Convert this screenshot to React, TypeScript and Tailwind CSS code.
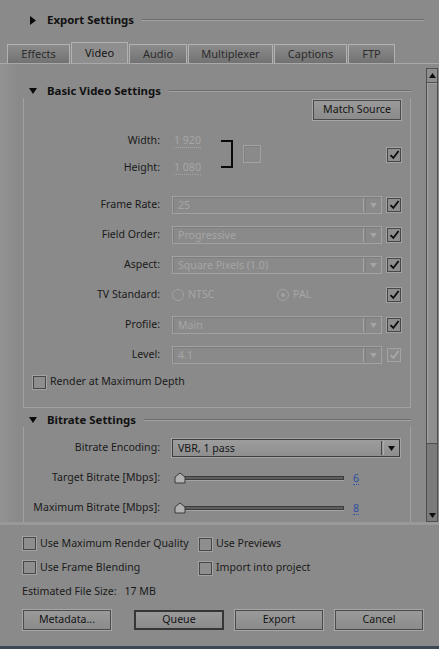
import clsx from "clsx";

const font = "font-['Noto_Sans',sans-serif]";
const dim = "text-[#a6a6a6]";

function DownTri({ className }: { className?: string }) {
  return (
    <svg width="8" height="6" viewBox="0 0 8 6" className={className}>
      <path d="M0 0H8L4 6Z" fill="currentColor" />
    </svg>
  );
}

function Check({ checked, disabled, size = 14 }: { checked?: boolean; disabled?: boolean; size?: number }) {
  return (
    <span
      className={clsx(
        "flex shrink-0 items-center justify-center border",
        size === 14 ? "h-[14px] w-[14px]" : "h-[13px] w-[13px]",
        disabled
          ? "border-[#a3a3a3] bg-[#8b8b8b]"
          : "border-[#474747] bg-[#8e8e8e] shadow-[0_0_0_1px_#a2a2a2]"
      )}
    >
      {checked && (
        <svg width="11" height="10" viewBox="0 0 11 10">
          <path
            d="M1.5 5.2L4.3 8L9.6 1"
            stroke={disabled ? "#a9a9a9" : "#0c0c0c"}
            strokeWidth="1.8"
            fill="none"
          />
        </svg>
      )}
    </span>
  );
}

function Select({ value, enabled, width }: { value: string; enabled?: boolean; width: string }) {
  return (
    <div
      className={clsx(
        "flex h-[18px] items-center border",
        width,
        enabled
          ? "border-[#3e3e3e] bg-gradient-to-b from-[#9d9d9d] to-[#8e8e8e] shadow-[0_0_0_1px_#a3a3a3]"
          : "border-[#a2a2a2] shadow-[inset_1px_1px_0_#7d7d7d]"
      )}
    >
      <span className={clsx("flex-1 pl-[5px] leading-none", enabled ? "text-[#161616]" : dim)}>{value}</span>
      <span
        className={clsx(
          "h-[14px] w-[3px] border-l border-r",
          enabled ? "border-l-[#444] border-r-[#a9a9a9]" : "border-l-[#a6a6a6] border-r-[#7f7f7f]"
        )}
      />
      <span className="flex w-[15px] justify-center">
        <svg width="7" height="5" viewBox="0 0 7 5">
          <path d="M0 0H7L3.5 5Z" fill={enabled ? "#0d0d0d" : "#a4a4a4"} />
        </svg>
      </span>
    </div>
  );
}

function Row({ label, children }: { label: string; children: React.ReactNode }) {
  return (
    <div className="flex h-[30px] items-center">
      <span className="w-[136px] text-right text-[#1a1a1a]">{label}</span>
      <div className="ml-[12px] flex items-center">{children}</div>
    </div>
  );
}

function GroupHeader({ title }: { title: string }) {
  return (
    <div className="relative -mx-px flex h-[14px] items-center bg-[#8a8a8a]">
      <DownTri className="ml-[6px] text-[#0a0a0a]" />
      <span className="ml-[10px] text-[11.4px] font-bold text-[#111]">{title}</span>
      <span className="ml-[8px] h-[2px] flex-1 border-t border-b border-t-[#6c6c6c] border-b-[#a3a3a3]" />
    </div>
  );
}

function Radio({ on, label }: { on?: boolean; label: string }) {
  return (
    <span className="flex items-center">
      <span className="flex h-[12px] w-[12px] items-center justify-center rounded-full border border-[#a3a3a3]">
        {on && <span className="h-[4px] w-[4px] rounded-full bg-[#a0a0a0]" />}
      </span>
      <span className={clsx("ml-[4px]", dim)}>{label}</span>
    </span>
  );
}

function Slider({ value }: { value: string }) {
  return (
    <div className="flex items-center">
      <div className="relative flex h-[14px] w-[172px] items-center">
        <span className="ml-[8px] h-[4px] w-[164px] border border-[#3c3c3c] bg-[#5e5e5e] shadow-[0_1px_0_#a4a4a4]" />
        <svg width="12" height="12" viewBox="0 0 12 12" className="absolute left-[2px] top-[1px]">
          <path d="M1 11V5L6 1L11 5V11Z" fill="#b2b2b2" stroke="#3a3a3a" strokeWidth="1" />
        </svg>
      </div>
      <span className="ml-[9px] border-b border-dotted border-[#2f55a8] leading-[12px] text-[#2d4f9e]">{value}</span>
    </div>
  );
}

function Btn({ label, primary }: { label: string; primary?: boolean }) {
  return (
    <button
      className={clsx(
        "flex h-[20px] items-center justify-center bg-gradient-to-b from-[#9a9a9a] to-[#8b8b8b] text-[#141414]",
        primary
          ? "w-[90px] border-2 border-[#363636]"
          : "w-[88px] border border-[#4a4a4a] shadow-[0_0_0_1px_#a6a6a6]"
      )}
    >
      {label}
    </button>
  );
}

const tabs = [
  { name: "Effects", w: "w-[63px]" },
  { name: "Video", w: "w-[57px]", active: true },
  { name: "Audio", w: "w-[58px]" },
  { name: "Multiplexer", w: "w-[85px]" },
  { name: "Captions", w: "w-[73px]" },
  { name: "FTP", w: "w-[47px]" },
];

export default function App() {
  return (
    <div className={clsx("flex h-[649px] w-[439px] flex-col overflow-hidden bg-[#8a8a8a] text-[10.6px]", font)}>
      {/* export settings header */}
      <div className="flex h-[40px] shrink-0 items-center pl-[30px] pr-[15px]">
        <svg width="6" height="9" viewBox="0 0 6 9">
          <path d="M0 0L6 4.5L0 9Z" fill="#0a0a0a" />
        </svg>
        <span className="ml-[11px] text-[11.4px] font-bold text-[#111]">Export Settings</span>
        <span className="ml-[8px] h-[2px] flex-1 border-t border-b border-t-[#6c6c6c] border-b-[#a3a3a3]" />
      </div>

      {/* tabs */}
      <div className="flex h-[24px] shrink-0 items-end gap-[1px] border-b border-[#a9a9a9] pl-[7px]">
        {tabs.map((t) => (
          <div
            key={t.name}
            className={clsx(
              "flex items-center justify-center border-l border-r border-t border-[#b2b2b2] text-[11px]",
              t.w,
              t.active
                ? "h-[21px] bg-[#8e8e8e] text-[#151515]"
                : "h-[19px] bg-gradient-to-b from-[#8c8c8c] to-[#727272] text-[#2c2c2c]"
            )}
          >
            {t.name}
          </div>
        ))}
      </div>

      {/* scroll area */}
      <div className="flex h-[458px] shrink-0">
        <div className="flex-1 overflow-hidden bg-[linear-gradient(to_right,#939393,#8a8a8a_18px)]">
          {/* Basic video settings */}
          <div className="ml-[23px] mt-[20px] w-[388px] border-b border-l border-r border-[#a1a1a1] pb-[15px]">
            <GroupHeader title="Basic Video Settings" />
            <div className="mt-[2px] flex justify-end pr-[9px]">
              <Btn label="Match Source" />
            </div>

            <div className="mt-[7px] flex h-[54px] items-center">
              <div className="flex w-[136px] flex-col items-end text-[#1a1a1a]">
                <span className="flex h-[27px] items-center">Width:</span>
                <span className="flex h-[27px] items-center">Height:</span>
              </div>
              <div className="ml-[14px] flex w-[47px] flex-col">
                <span className="flex h-[27px] items-center">
                  <span className={clsx("border-b border-dotted border-[#a6a6a6] leading-[13px]", dim)}>1 920</span>
                </span>
                <span className="flex h-[27px] items-center">
                  <span className={clsx("border-b border-dotted border-[#a6a6a6] leading-[13px]", dim)}>1 080</span>
                </span>
              </div>
              <span className="h-[28px] w-[12px] border-b-2 border-r-2 border-t-2 border-[#0a0a0a]" />
              <span className="ml-[10px] h-[18px] w-[18px] border border-[#a2a2a2] shadow-[inset_1px_1px_0_#7f7f7f]" />
              <span className="flex-1" />
              <span className="mr-[9px] mt-[2px]">
                <Check checked />
              </span>
            </div>

            <div className="mt-[9px]">
              <Row label="Frame Rate:">
                <Select value="25" width="w-[210px]" />
                <span className="ml-[5px]"><Check checked /></span>
              </Row>
              <Row label="Field Order:">
                <Select value="Progressive" width="w-[210px]" />
                <span className="ml-[5px]"><Check checked /></span>
              </Row>
              <Row label="Aspect:">
                <Select value="Square Pixels (1.0)" width="w-[210px]" />
                <span className="ml-[5px]"><Check checked /></span>
              </Row>
              <Row label="TV Standard:">
                <div className="flex w-[210px] items-center">
                  <span className="w-[105px]"><Radio label="NTSC" /></span>
                  <Radio on label="PAL" />
                </div>
                <span className="ml-[5px]"><Check checked /></span>
              </Row>
              <Row label="Profile:">
                <Select value="Main" width="w-[210px]" />
                <span className="ml-[5px]"><Check checked /></span>
              </Row>
              <Row label="Level:">
                <Select value="4.1" width="w-[210px]" />
                <span className="ml-[5px]"><Check checked disabled /></span>
              </Row>
            </div>

            <div className="mt-[2px] flex h-[20px] items-center pl-[9px]">
              <Check size={13} />
              <span className="ml-[4px] text-[#1a1a1a]">Render at Maximum Depth</span>
            </div>
          </div>

          {/* Bitrate settings */}
          <div className="ml-[23px] mt-[5px] w-[388px] border-l border-r border-[#a1a1a1] pb-[20px]">
            <GroupHeader title="Bitrate Settings" />
            <div className="mt-[6px]">
              <Row label="Bitrate Encoding:">
                <Select value="VBR, 1 pass" enabled width="w-[228px]" />
              </Row>
              <Row label="Target Bitrate [Mbps]:">
                <Slider value="6" />
              </Row>
              <Row label="Maximum Bitrate [Mbps]:">
                <Slider value="8" />
              </Row>
            </div>
          </div>
        </div>

        {/* scrollbar */}
        <div className="mr-[1px] mt-[4px] flex h-[454px] w-[12px] flex-col border border-[#4e4e4e] bg-[#7b7b7b]">
          <div className="flex h-[14px] items-center justify-center border-b border-[#4e4e4e] bg-[#8e8e8e]">
            <svg width="7" height="5" viewBox="0 0 7 5">
              <path d="M0 5H7L3.5 0Z" fill="#0d0d0d" />
            </svg>
          </div>
          <div className="h-[361px] border-b border-[#4e4e4e] bg-[#8f8f8f] shadow-[inset_1px_1px_0_#a2a2a2]" />
          <div className="flex-1" />
          <div className="flex h-[12px] items-center justify-center">
            <svg width="7" height="5" viewBox="0 0 7 5">
              <path d="M0 0H7L3.5 5Z" fill="#0d0d0d" />
            </svg>
          </div>
        </div>
      </div>

      {/* bottom panel */}
      <div className="flex flex-1 flex-col border-t-[3px] border-[#999] pl-[23px]">
        <div className="mt-[7px] flex h-[24px] items-center">
          <span className="flex w-[176px] items-center">
            <Check size={13} />
            <span className="ml-[4px] text-[#1a1a1a]">Use Maximum Render Quality</span>
          </span>
          <Check size={13} />
          <span className="ml-[4px] text-[#1a1a1a]">Use Previews</span>
        </div>
        <div className="flex h-[24px] items-center">
          <span className="flex w-[176px] items-center">
            <Check size={13} />
            <span className="ml-[4px] text-[#1a1a1a]">Use Frame Blending</span>
          </span>
          <Check size={13} />
          <span className="ml-[4px] text-[#1a1a1a]">Import into project</span>
        </div>
        <div className="flex h-[24px] items-center text-[#1a1a1a]">
          <span className="-ml-px">Estimated File Size:</span>
          <span className="ml-[8px]">17 MB</span>
        </div>
        <div className="mt-[6px] flex items-center">
          <Btn label="Metadata..." />
          <span className="ml-[23px]"><Btn label="Queue" primary /></span>
          <span className="ml-[11px]"><Btn label="Export" /></span>
          <span className="ml-[12px]"><Btn label="Cancel" /></span>
        </div>
        <div className="flex-1" />
      </div>
      <div className="h-[3px] shrink-0 bg-[#3c4756]" />
    </div>
  );
}
